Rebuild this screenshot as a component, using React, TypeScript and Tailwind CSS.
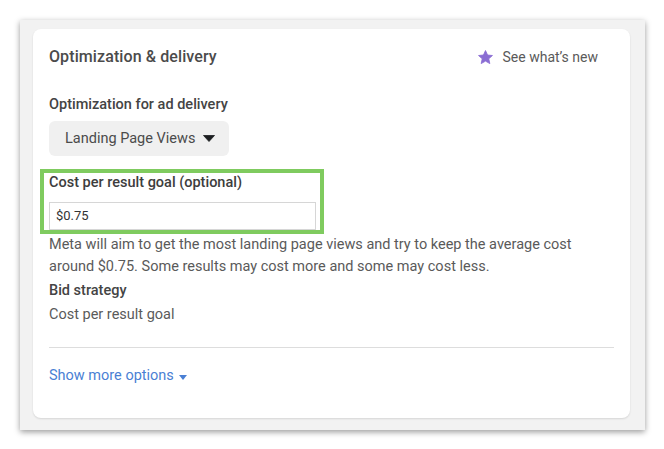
function Star() {
  return (
    <svg viewBox="0 0 24 24" className="w-[17px] h-[17px]" fill="#8a6dd3">
      <path d="M12 2.2l2.9 6.3 6.9.7-5.2 4.6 1.5 6.8L12 17.1l-6.1 3.5 1.5-6.8-5.2-4.6 6.9-.7z" strokeLinejoin="round" stroke="#8a6dd3" strokeWidth="1.2" />
    </svg>
  )
}

function Caret({ size = 'md' }: { size?: 'md' | 'sm' }) {
  if (size === 'sm') {
    return (
      <svg viewBox="0 0 8 5" className="w-[8px] h-[5px] ml-[5px] mt-[2px]" fill="#4a7fd4">
        <path d="M0 0h8L4 5z" />
      </svg>
    )
  }
  return (
    <svg viewBox="0 0 12 7" className="w-[12px] h-[7px]" fill="#1c1e21">
      <path d="M0.5 0.5h11L6 6.5z" strokeLinejoin="round" stroke="#1c1e21" strokeWidth="0.8" />
    </svg>
  )
}

export default function App() {
  return (
    <div className="w-[664px] h-[449px] bg-white pt-[20px] pl-[20px] font-['Roboto',sans-serif]">
      <div className="w-[625px] h-[410px] bg-[#f2f2f2] shadow-[0_2px_6px_rgba(0,0,0,0.4)] pt-[9px] pl-[13px]">
        <div className="w-[597px] h-[389px] bg-white rounded-[8px] shadow-[0_1px_2px_rgba(0,0,0,0.12)] px-[16px] pt-[18px]">
          {/* Header */}
          <div className="flex items-center justify-between h-[20px] pr-[16px]">
            <h2 className="text-[16px] leading-[20px] font-medium text-[#4b4b4b] tracking-[0.1px]">
              Optimization &amp; delivery
            </h2>
            <div className="flex items-center gap-[9px] text-[14px] text-[#5a5a5a]">
              <Star />
              <span>See what&#8217;s new</span>
            </div>
          </div>

          {/* Optimization */}
          <p className="mt-[28px] text-[14.5px] leading-[20px] font-medium text-[#444]">
            Optimization for ad delivery
          </p>
          <button className="mt-[6px] h-[35px] w-[180px] bg-[#f0f0f0] rounded-[6px] flex items-center pl-[16px] pr-[14px] justify-between text-[14.5px] text-[#4b4b4b]">
            <span>Landing Page Views</span>
            <Caret />
          </button>

          {/* Cost goal highlight */}
          <div className="mt-[13px] ml-[-9px] w-[284px] border-[4px] border-[#7fcb5f] pl-[5px] pr-[4px]">
            <p className="text-[14.5px] leading-[20px] font-medium text-[#3d3d3d]">
              Cost per result goal (optional)
            </p>
            <div className="mt-[9px] h-[28px] border border-[#d6d6d6] bg-white flex items-center pl-[6px] text-[13px] text-[#333]">
              $0.75
            </div>
          </div>

          <p className="text-[14.5px] leading-[22px] text-[#5a5a5a] w-[540px]">
            Meta will aim to get the most landing page views and try to keep the average cost around $0.75. Some results may cost more and some may cost less.
          </p>

          <p className="mt-[3px] text-[14.5px] leading-[20px] font-medium text-[#444]">Bid strategy</p>
          <p className="mt-[4px] text-[14.5px] leading-[20px] text-[#5a5a5a]">Cost per result goal</p>

          <div className="mt-[22px] h-px bg-[#dddddd]" />

          <button className="mt-[18px] flex items-center text-[14.5px] leading-[20px] text-[#4a7fd4]">
            Show more options
            <Caret size="sm" />
          </button>
        </div>
      </div>
    </div>
  )
}
